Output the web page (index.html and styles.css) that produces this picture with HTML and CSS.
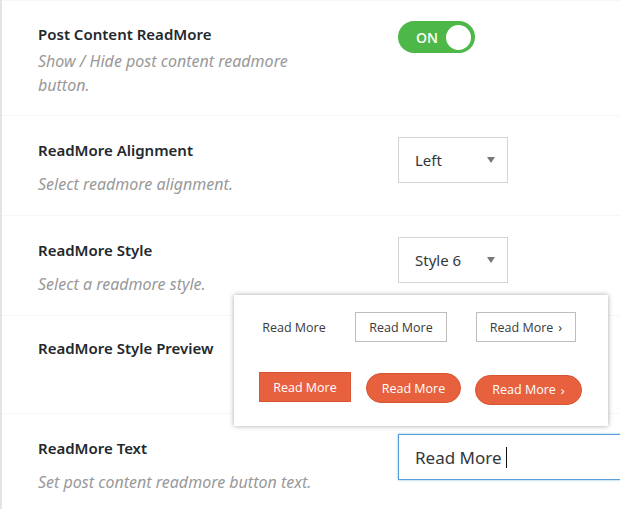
FILE: index.html
```html
<!DOCTYPE html>
<html>
<head>
<meta charset="utf-8">
<link rel="stylesheet" href="styles.css">
</head>
<body>
<div class="panel">
  <div class="row row-first">
    <div class="label">
      <div class="title">Post Content ReadMore</div>
      <div class="desc desc-tight">Show / Hide post content readmore button.</div>
    </div>
    <div class="control">
      <div class="toggle"><span class="toggle-text">ON</span><span class="knob"></span></div>
    </div>
  </div>
  <div class="row">
    <div class="label">
      <div class="title">ReadMore Alignment</div>
      <div class="desc">Select readmore alignment.</div>
    </div>
    <div class="control">
      <div class="select"><span>Left</span><span class="arrow"></span></div>
    </div>
  </div>
  <div class="row">
    <div class="label">
      <div class="title">ReadMore Style</div>
      <div class="desc">Select a readmore style.</div>
    </div>
    <div class="control">
      <div class="select"><span>Style 6</span><span class="arrow"></span></div>
    </div>
  </div>
  <div class="row row-preview">
    <div class="label">
      <div class="title">ReadMore Style Preview</div>
    </div>
    <div class="preview">
      <div class="pv-line">
        <span class="rm rm-plain">Read More</span>
        <span class="rm rm-outline rm-o1">Read More</span>
        <span class="rm rm-outline rm-o2">Read More <span class="chev">›</span></span>
      </div>
      <div class="pv-line pv-line2">
        <span class="rm rm-fill rm-f1">Read More</span>
        <span class="rm rm-fill rm-pill rm-f2">Read More</span>
        <span class="rm rm-fill rm-pill rm-f3">Read More <span class="chev">›</span></span>
      </div>
    </div>
  </div>
  <div class="row row-last">
    <div class="label">
      <div class="title">ReadMore Text</div>
      <div class="desc">Set post content readmore button text.</div>
    </div>
    <div class="control control-input">
      <div class="textinput"><span>Read More</span><span class="caret"></span></div>
    </div>
  </div>
</div>
</body>
</html>
```

FILE: styles.css
```css
html, body {
  margin: 0;
  padding: 0;
  background: #fff;
}
body {
  font-family: "Noto Sans", "Open Sans", sans-serif;
  color: #23282d;
  overflow: hidden;
}
.panel {
  border-left: 2px solid #e4e4e4;
  height: 509px;
}
.row {
  display: grid;
  grid-template-columns: 280px 1fr;
  align-items: start;
  column-gap: 80px;
  padding: 24px 0 0 36px;
  height: 100px;
  border-bottom: 1px solid #f7f7f7;
  box-sizing: border-box;
}
.row-first {
  border-top: 1px solid #f7f7f7;
  height: 116px;
  padding-top: 23px;
}
.row-preview {
  position: relative;
  padding-top: 22px;
  height: 98px;
}
.row-last {
  border-bottom: none;
  height: 95px;
}
.title {
  font-size: 15px;
  line-height: 20px;
  font-weight: 600;
  color: #23282d;
}
.desc {
  margin-top: 12px;
  font-size: 16px;
  line-height: 24px;
  font-style: italic;
  color: #999999;
}
.desc-tight {
  margin-top: 5px;
}
.control {
  margin-top: -3px;
}
.control-input {
  margin-top: -4px;
}
.toggle {
  width: 77px;
  height: 32px;
  border-radius: 16px;
  background: #4db848;
  display: flex;
  align-items: center;
  justify-content: space-between;
  padding: 0 4px 0 18px;
  box-sizing: border-box;
}
.toggle-text {
  color: #fff;
  font-weight: 600;
  font-size: 14px;
  font-family: "Open Sans", "Noto Sans", sans-serif;
}
.knob {
  width: 25px;
  height: 25px;
  border-radius: 50%;
  background: #fff;
}
.select {
  width: 110px;
  height: 46px;
  border: 1px solid #d4d4d4;
  box-sizing: border-box;
  display: flex;
  align-items: center;
  justify-content: space-between;
  padding: 0 12px 0 16px;
  font-size: 15px;
  color: #32373c;
}
.arrow {
  width: 0;
  height: 0;
  border-left: 4px solid transparent;
  border-right: 4px solid transparent;
  border-top: 6px solid #777;
}
.preview {
  position: absolute;
  left: 232px;
  top: -21px;
  width: 374px;
  height: 131px;
  background: #fff;
  box-shadow: 0 0 5px rgba(0, 0, 0, 0.35);
  font-family: "Open Sans", "Noto Sans", sans-serif;
  font-size: 12.5px;
  box-sizing: border-box;
  padding-top: 17px;
}
.pv-line {
  display: flex;
  align-items: center;
  height: 30px;
}
.pv-line2 {
  margin-top: 30px;
}
.rm {
  display: flex;
  align-items: center;
  justify-content: center;
  box-sizing: border-box;
  white-space: nowrap;
  color: #3a3a3a;
}
.rm-plain {
  margin-left: 27px;
  width: 66px;
}
.rm-outline {
  height: 30px;
  border: 1px solid #bdbdbd;
}
.rm-o1 {
  margin-left: 28px;
  width: 92px;
}
.rm-o2 {
  margin-left: 29px;
  width: 100px;
}
.chev {
  margin-left: 5px;
  font-size: 13px;
}
.rm-fill {
  background: #e8613f;
  color: #fff;
  height: 30px;
}
.rm-f1 {
  margin-left: 25px;
  width: 92px;
  border: 1px solid #d65535;
}
.rm-pill {
  border-radius: 15px;
  border: 1px solid #d65535;
}
.rm-f2 {
  margin-left: 15px;
  width: 95px;
  margin-top: 2px;
}
.rm-f3 {
  margin-left: 14px;
  width: 107px;
  margin-top: 5px;
}
.textinput {
  width: 240px;
  height: 46px;
  border: 1px solid #5b9dd9;
  box-shadow: 0 0 2px rgba(30, 140, 190, 0.6);
  box-sizing: border-box;
  display: flex;
  align-items: center;
  padding-left: 16px;
  font-size: 17px;
  color: #32373c;
}
.caret {
  display: inline-block;
  width: 1px;
  height: 21px;
  background: #111;
  margin-left: 4px;
}
```
